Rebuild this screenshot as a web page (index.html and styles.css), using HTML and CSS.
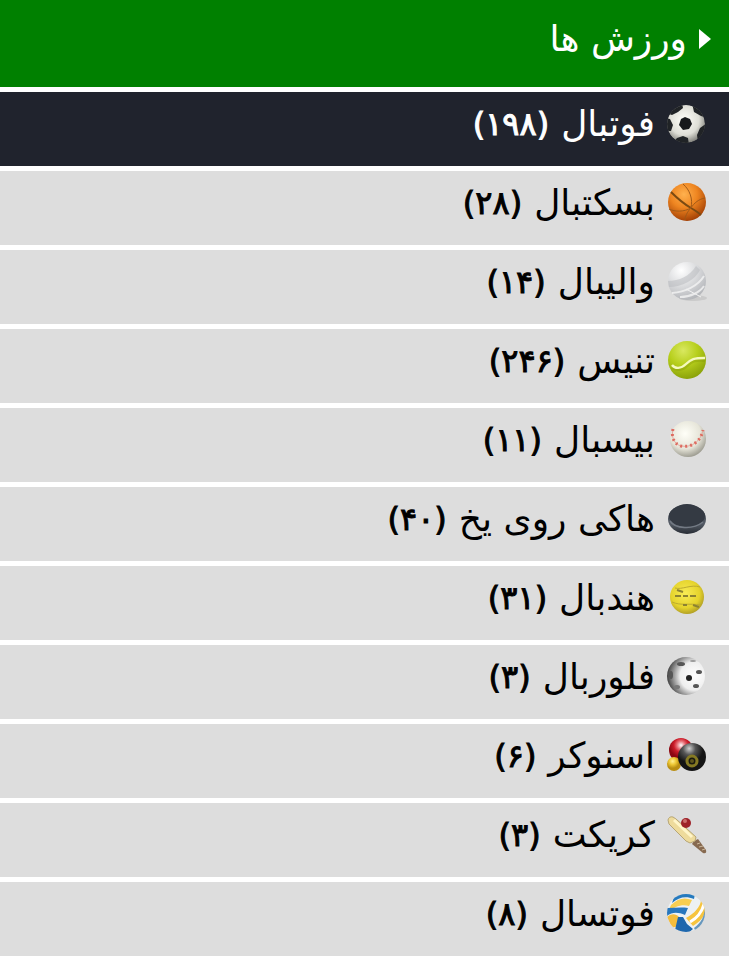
FILE: index.html
```html
<!DOCTYPE html>
<html lang="fa" dir="rtl">
<head>
  <meta charset="UTF-8" />
  <title>ورزش ها</title>
  <meta name="viewport" content="width=device-width, initial-scale=1.0" />
  <link rel="stylesheet" href="styles.css">
</head>
<body>
  <nav class="sports">
    <h2 class="title">
      <svg class="arrow" viewBox="0 0 12 20" aria-hidden="true"><path d="M0 0L12 10L0 20Z" fill="#fff"/></svg>
      <span>ورزش ها</span>
    </h2>
    <ul class="list">
      <li>
        <a class="item active" href="#football">
          <svg class="icon" viewBox="0 0 40 40" aria-hidden="true">
            <defs>
              <radialGradient id="soccer" cx=".45" cy=".4" r=".6"><stop offset="0" stop-color="#fffffa"/><stop offset=".65" stop-color="#deded6"/><stop offset="1" stop-color="#85857f"/></radialGradient>
              <clipPath id="soccerClip"><circle cx="19" cy="20" r="19"/></clipPath>
            </defs>
            <g clip-path="url(#soccerClip)">
              <circle cx="19" cy="20" r="19" fill="url(#soccer)"/>
              <path d="M14 15L18 13L23 15L25 20L22 25L16 26L12 21Z" fill="#17191b"/>
              <path d="M2 10L9 0L15 -1L16 4L11 8L5 11ZM25 -1L40 0V14L34 12L27 8ZM-1 14L3 15L6 21L4 27L-1 27ZM40 19L39 34L31 38L30 31L33 24ZM5 40L10 34L16 32L21 34L22 41Z" fill="#202326"/>
            </g>
          </svg>
          <span class="name">فوتبال</span>
          <span class="count">(۱۹۸)</span>
        </a>
      </li>
      <li>
        <a class="item" href="#basketball">
          <svg class="icon" viewBox="0 0 40 40" aria-hidden="true">
            <defs><radialGradient id="basket" cx=".42" cy=".3" r=".7"><stop offset="0" stop-color="#ffb14e"/><stop offset=".5" stop-color="#ee8520"/><stop offset="1" stop-color="#a54206"/></radialGradient></defs>
            <circle cx="20" cy="19" r="19" fill="url(#basket)"/>
            <path d="M4 9C10 15 17 21 24 25C29 28 32 30 34 32" fill="none" stroke="#7a4a12" stroke-width="2"/>
            <path d="M16 1C23 7 26 16 24 25C17 29 8 29 2 26M24 25C27 20 32 16 38 15M24 25C20 29 18 34 18 37" fill="none" stroke="#a05a18" stroke-width="1"/>
          </svg>
          <span class="name">بسکتبال</span>
          <span class="count">(۲۸)</span>
        </a>
      </li>
      <li>
        <a class="item" href="#volleyball">
          <svg class="icon" viewBox="0 0 40 40" aria-hidden="true">
            <defs><radialGradient id="volley" cx=".35" cy=".22" r=".8"><stop offset="0" stop-color="#fff"/><stop offset=".5" stop-color="#dcdddf"/><stop offset="1" stop-color="#b4b6ba"/></radialGradient></defs>
            <ellipse cx="26" cy="36" rx="14" ry="3" fill="#cacaca"/>
            <circle cx="20" cy="19" r="19" fill="url(#volley)"/>
            <path d="M1 19C12 19 23 14 29 4L33 8C28 18 15 25 2 25Z" fill="#b5b7bb" opacity=".5"/>
            <path d="M5 31C18 30 31 24 37 14M13 35C24 35 33 30 37 24" fill="none" stroke="#f4f4f4" stroke-width="2" opacity=".8"/>
            <path d="M19 27L34 35" stroke="#f2f2f2" stroke-width="1"/>
          </svg>
          <span class="name">والیبال</span>
          <span class="count">(۱۴)</span>
        </a>
      </li>
      <li>
        <a class="item" href="#tennis">
          <svg class="icon" viewBox="0 0 40 40" aria-hidden="true">
            <defs><radialGradient id="tennis" cx=".4" cy=".25" r=".75"><stop offset="0" stop-color="#d9e860"/><stop offset=".5" stop-color="#b7cf1c"/><stop offset="1" stop-color="#8ca30a"/></radialGradient></defs>
            <circle cx="20" cy="19" r="19" fill="url(#tennis)"/>
            <path d="M5 26C9 29 15 29 20 24C25 19 28 18 38 19" fill="none" stroke="#869b0b" stroke-width="4" opacity=".4"/>
            <path d="M5 24C8 28 14 28 19 23C24 18 27 17 38 17" fill="none" stroke="#f5f9be" stroke-width="2.4"/>
          </svg>
          <span class="name">تنیس</span>
          <span class="count">(۲۴۶)</span>
        </a>
      </li>
      <li>
        <a class="item" href="#baseball">
          <svg class="icon" viewBox="0 0 40 40" aria-hidden="true">
            <defs><radialGradient id="base" cx=".42" cy=".35" r=".65"><stop offset="0" stop-color="#fffff8"/><stop offset=".65" stop-color="#e6e5d9"/><stop offset="1" stop-color="#a1a095"/></radialGradient></defs>
            <circle cx="21" cy="19" r="18" fill="url(#base)"/>
            <path d="M6 9C4 17 7 24 14 26C25 28 34 21 36 10" fill="none" stroke="#e3aaa0" stroke-width="1"/>
            <path d="M6 9C4 17 7 24 14 26C25 28 34 21 36 10" fill="none" stroke="#de6d62" stroke-width="3" stroke-dasharray="2 3"/>
          </svg>
          <span class="name">بیسبال</span>
          <span class="count">(۱۱)</span>
        </a>
      </li>
      <li>
        <a class="item" href="#ice-hockey">
          <svg class="icon" viewBox="0 0 40 40" aria-hidden="true">
            <defs><linearGradient id="puck" x2="0" y2="1"><stop offset="0" stop-color="#303740"/><stop offset=".65" stop-color="#555c66"/><stop offset="1" stop-color="#272c34"/></linearGradient></defs>
            <ellipse cx="20" cy="20" rx="19" ry="15" fill="url(#puck)"/>
            <ellipse cx="20" cy="17" rx="18" ry="11" fill="#343a43"/>
            <path d="M3 22C8 30 26 31 36 23" fill="none" stroke="#737a84" stroke-width="1.5"/>
          </svg>
          <span class="name">هاکی روی یخ</span>
          <span class="count">(۴۰)</span>
        </a>
      </li>
      <li>
        <a class="item" href="#handball">
          <svg class="icon" viewBox="0 0 40 40" aria-hidden="true">
            <defs><radialGradient id="hand" cx=".45" cy=".4" r=".6"><stop offset="0" stop-color="#f9ec55"/><stop offset=".7" stop-color="#e5d32c"/><stop offset="1" stop-color="#b3a126"/></radialGradient></defs>
            <circle cx="20" cy="19" r="17" fill="url(#hand)"/>
            <path d="M8 10C15 12 24 6 33 9M5 24C14 28 22 25 34 27" fill="none" stroke="#bcab30" stroke-width="1"/>
            <path d="M8 18H14M16 18H21M23 18H29M10 12L16 14M16 27H20M26 27L32 29" fill="none" stroke="#8c8232" stroke-width="2"/>
          </svg>
          <span class="name">هندبال</span>
          <span class="count">(۳۱)</span>
        </a>
      </li>
      <li>
        <a class="item" href="#floorball">
          <svg class="icon" viewBox="0 0 40 40" aria-hidden="true">
            <defs><radialGradient id="floor" cx=".72" cy=".5" r=".75"><stop offset="0" stop-color="#fff"/><stop offset=".5" stop-color="#eee"/><stop offset=".75" stop-color="#909090"/><stop offset="1" stop-color="#303030"/></radialGradient></defs>
            <circle cx="19" cy="19" r="19" fill="url(#floor)"/>
            <g fill="#555">
              <circle cx="22" cy="21" r="3" fill="#222"/>
              <ellipse cx="32" cy="15" rx="3" ry="2"/>
              <ellipse cx="29" cy="29" rx="3" ry="2"/>
              <ellipse cx="26" cy="4" rx="3" ry="1" fill="#999"/>
              <ellipse cx="14" cy="7" rx="4" ry="2"/>
              <ellipse cx="4" cy="18" rx="2" ry="4"/>
              <ellipse cx="10" cy="30" rx="3" ry="2" fill="#777"/>
            </g>
          </svg>
          <span class="name">فلوربال</span>
          <span class="count">(۳)</span>
        </a>
      </li>
      <li>
        <a class="item" href="#snooker">
          <svg class="icon" viewBox="0 0 40 40" aria-hidden="true">
            <defs>
              <radialGradient id="red" cx=".5" cy=".3"><stop offset="0" stop-color="#fff"/><stop offset=".35" stop-color="#e66a72"/><stop offset=".6" stop-color="#cb1c29"/><stop offset="1" stop-color="#8c0712"/></radialGradient>
              <radialGradient id="black" cx=".4" cy=".2"><stop offset="0" stop-color="#d0d0d0"/><stop offset=".45" stop-color="#555"/><stop offset="1" stop-color="#141414"/></radialGradient>
              <radialGradient id="yellow" cx=".4" cy=".3"><stop offset="0" stop-color="#fff092"/><stop offset=".5" stop-color="#edc735"/><stop offset="1" stop-color="#b98e12"/></radialGradient>
            </defs>
            <circle cx="14" cy="14" r="12" fill="url(#red)"/>
            <circle cx="7" cy="28" r="7" fill="url(#yellow)"/>
            <circle cx="25" cy="21" r="14" fill="url(#black)"/>
            <circle cx="25" cy="25" r="5" fill="#1b1a10" stroke="#857923" stroke-width="3"/>
            <circle cx="25" cy="25" r="2" fill="#5d541b"/>
          </svg>
          <span class="name">اسنوکر</span>
          <span class="count">(۶)</span>
        </a>
      </li>
      <li>
        <a class="item" href="#cricket">
          <svg class="icon" viewBox="0 0 40 40" aria-hidden="true">
            <path d="M27 26L31 24L39 35Q40 39 36 38L25 29Z" fill="#876a50"/>
            <path d="M30 29L33 28M32 32L36 31M35 35L38 34" stroke="#ccb79b" stroke-width="1"/>
            <path d="M1 5Q2 1 6 2L9 4L29 22L28 26L23 28L19 26L2 9Z" fill="#eedb9c" stroke="#b7a675" stroke-width="1"/>
            <path d="M7 5L25 22" stroke="#fff5c9" stroke-width="3"/>
            <circle cx="19" cy="8" r="5" fill="#9e2229"/>
            <circle cx="18" cy="6" r="2" fill="#cb6d6c"/>
          </svg>
          <span class="name">کریکت</span>
          <span class="count">(۳)</span>
        </a>
      </li>
      <li>
        <a class="item" href="#futsal">
          <svg class="icon" viewBox="0 0 40 40" aria-hidden="true">
            <defs><clipPath id="futsalClip"><circle cx="19" cy="19" r="19"/></clipPath></defs>
            <g clip-path="url(#futsalClip)">
              <circle cx="19" cy="19" r="19" fill="#edf1f3"/>
              <path d="M8 0H28L27 5C19 2 12 3 5 9Z" fill="#267abe"/>
              <path d="M4 11C11 4 18 3 25 6L22 12C14 10 8 13 1 18Z" fill="#f7ce50"/>
              <path d="M0 14C7 14 14 13 21 14L18 21C11 18 5 18 0 22Z" fill="#2877bd"/>
              <path d="M0 23C5 19 9 20 12 23L11 32L5 34Z" fill="#f4bd3d"/>
              <path d="M11 23L16 23L20 30L26 35L20 40L8 36Z" fill="#1e67ad"/>
              <path d="M19 24C27 20 34 12 34 6L40 12C39 21 33 28 26 32Z" fill="#f6c43f"/>
              <path d="M27 34C34 29 38 22 38 12L42 23L30 40Z" fill="#6797bd"/>
              <path d="M23 28C30 24 35 18 37 10" stroke="#fff" stroke-width="3" fill="none"/>
            </g>
          </svg>
          <span class="name">فوتسال</span>
          <span class="count">(۸)</span>
        </a>
      </li>
    </ul>
  </nav>
</body>
</html>
```
FILE: styles.css
```css
body {
  margin: 0;
  background: #fff;
  font-family: "DejaVu Sans", sans-serif;
  font-size: 36px;
}

.title {
  display: flex;
  align-items: center;
  gap: 12px;
  margin: 0 0 5px;
  padding: 15px 18px 24px;
  background: #008000;
  color: #fff;
  font-size: 36px;
  font-weight: normal;
  line-height: 48px;
}

.arrow {
  width: 12px;
  height: 20px;
}

.list {
  display: flex;
  flex-direction: column;
  gap: 5px;
  margin: 0;
  padding: 0;
  list-style: none;
}

.item {
  display: flex;
  align-items: center;
  padding: 8px 22px 18px;
  background: #ddd;
  color: #000;
  line-height: 48px;
  text-decoration: none;
}

.item.active {
  background: #20232d;
  color: #fff;
}

.icon {
  flex: none;
  width: 40px;
  height: 40px;
  margin-left: 12px;
}

.count {
  margin-right: 12px;
  font-size: 32px;
  -webkit-text-stroke: 1px currentColor;
}
```
